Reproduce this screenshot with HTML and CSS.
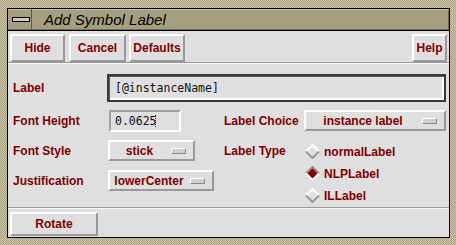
FILE: index.html
```html
<!DOCTYPE html>
<html lang="en">
<head>
    <meta charset="UTF-8">
    <title>Add Symbol Label</title>
    <link rel="stylesheet" href="styles.css">
</head>
<body>
    <div class="frame">
        <div class="window">
            <div class="titlebar">
                <div class="menu-btn"><span class="menu-bar"></span></div>
                <div class="title">Add Symbol Label</div>
            </div>

            <div class="content">
                <div class="actions">
                    <button class="btn btn-hide">Hide</button>
                    <button class="btn btn-cancel">Cancel</button>
                    <button class="btn btn-defaults">Defaults</button>
                    <button class="btn btn-help">Help</button>
                </div>

                <div class="form">
                    <div class="lbl">Label</div>
                    <div class="field field-label">[@instanceName]</div>

                    <div class="lbl">Font Height</div>
                    <div class="field field-height">0.0625<span class="cursor"></span></div>
                    <div class="lbl">Label Choice</div>
                    <div class="option option-choice">
                        <span class="option-text">instance label</span>
                        <span class="indicator"></span>
                    </div>

                    <div class="lbl">Font Style</div>
                    <div class="option option-style">
                        <span class="option-text">stick</span>
                        <span class="indicator"></span>
                    </div>
                    <div class="lbl">Label Type</div>
                    <div class="radios">
                        <div class="radio">
                            <svg width="15" height="15" viewBox="0 0 15 15">
                                <polyline points="1,7.5 7.5,1 14,7.5" fill="none" stroke="#fff" stroke-width="2"/>
                                <polyline points="1,7.5 7.5,14 14,7.5" fill="none" stroke="#999" stroke-width="2"/>
                            </svg>
                            <span>normalLabel</span>
                        </div>
                        <div class="radio">
                            <svg width="15" height="15" viewBox="0 0 15 15">
                                <polygon points="7.5,2 13,7.5 7.5,13 2,7.5" fill="#800000"/>
                                <polyline points="1,7.5 7.5,1 14,7.5" fill="none" stroke="#8c8c8c" stroke-width="2"/>
                                <polyline points="1,7.5 7.5,14 14,7.5" fill="none" stroke="#fff" stroke-width="2"/>
                            </svg>
                            <span>NLPLabel</span>
                        </div>
                        <div class="radio">
                            <svg width="15" height="15" viewBox="0 0 15 15">
                                <polyline points="1,7.5 7.5,1 14,7.5" fill="none" stroke="#fff" stroke-width="2"/>
                                <polyline points="1,7.5 7.5,14 14,7.5" fill="none" stroke="#999" stroke-width="2"/>
                            </svg>
                            <span>ILLabel</span>
                        </div>
                    </div>

                    <div class="lbl">Justification</div>
                    <div class="option option-just">
                        <span class="option-text">lowerCenter</span>
                        <span class="indicator"></span>
                    </div>
                </div>

                <div class="bottom">
                    <button class="btn btn-rotate">Rotate</button>
                </div>
            </div>
        </div>
    </div>
</body>
</html>
```

FILE: styles.css
```css
* {
    box-sizing: border-box;
}
body {
    margin: 0;
    width: 456px;
    height: 245px;
    overflow: hidden;
    font-family: "Liberation Sans", Arial, sans-serif;
}

/* window manager frame */
.frame {
    height: 245px;
    padding: 8px 6px 7px 7px;
    background: repeating-conic-gradient(#d2caab 0 25%, #a39c7e 0 50%) 0 0 / 2px 2px;
}
.window {
    height: 230px;
    border: 1px solid #000;
    display: flex;
    flex-direction: column;
    background: #dfdfdf;
}
.titlebar {
    height: 22px;
    flex: none;
    display: flex;
    align-items: center;
    background: #a59e7f;
    border-bottom: 1px solid #000;
    box-shadow: inset 0 1px 0 #c9c1a2, inset -1px -1px 0 #6e6850;
}
.menu-btn {
    width: 24px;
    height: 100%;
    padding-left: 4px;
    display: flex;
    align-items: center;
    border-right: 1px solid #5e5843;
}
.menu-bar {
    width: 18px;
    height: 5px;
    border: 1px solid #000;
    background: #d3cbab;
}
.title {
    margin-left: 12px;
    font-size: 15px;
    font-style: italic;
    color: #000;
}

/* dialog body */
.content {
    flex: 1;
    display: flex;
    flex-direction: column;
    color: #800000;
    font-size: 12px;
    font-weight: bold;
}
.actions {
    height: 32px;
    flex: none;
    display: flex;
    padding: 3px 2px 0 2px;
    border-bottom: 1px solid #9a9a9a;
}
.btn {
    height: 28px;
    margin: 0;
    padding: 0;
    font: bold 12px "Liberation Sans", Arial, sans-serif;
    color: #800000;
    background: #dfdfdf;
    border: 2px solid;
    border-color: #fff #999 #999 #fff;
}
.btn-hide { width: 55px; }
.btn-cancel { width: 57px; margin-left: 4px; }
.btn-defaults { width: 56px; margin-left: 3px; }
.btn-help { width: 35px; margin-left: auto; }

.form {
    height: 145px;
    flex: none;
    display: grid;
    grid-template-columns: 94px 117px 80px 142px;
    grid-template-rows: 28px 22px 22px 22px;
    row-gap: 8px;
    align-content: start;
    padding: 10px 0 0 5px;
    border-top: 1px solid #fafafa;
    border-bottom: 1px solid #9a9a9a;
}
.lbl {
    align-self: center;
}
.field {
    font: 11.5px "DejaVu Sans Mono", monospace;
    color: #111;
    display: flex;
    align-items: center;
}
.field-label {
    grid-column: 2 / 5;
    padding-left: 6px;
    border: 2px solid #383838;
    box-shadow: inset 1px 1px 0 #5a5a5a, inset -2px -2px 0 #fff;
}
.field-height {
    width: 72px;
    margin-left: 2px;
    padding-left: 4px;
    border: 2px solid;
    border-color: #a0a0a0 #fff #fff #a0a0a0;
}
.cursor {
    display: inline-block;
    width: 1px;
    height: 12px;
    margin-left: -2px;
    border-left: 1px dotted #333;
}

.option {
    height: 21px;
    align-self: start;
    display: flex;
    align-items: center;
    border: 2px solid;
    border-color: #fff #999 #999 #fff;
}
.option-text {
    flex: 1;
    text-align: center;
}
.indicator {
    width: 15px;
    height: 6px;
    margin: 0 7px 0 2px;
    background: #cfcfcf;
    border: 1px solid;
    border-color: #fff #8a8a8a #8a8a8a #fff;
}
.option-choice {
    width: 142px;
}
.option-style {
    width: 87px;
    margin-left: 1px;
}
.option-just {
    width: 106px;
    margin-left: 1px;
}

.radios {
    grid-row: 3 / span 2;
    grid-column: 4;
    align-self: start;
    margin: 4px 0 0 1px;
    display: flex;
    flex-direction: column;
    gap: 7px;
}
.radio {
    height: 15px;
    display: flex;
    align-items: center;
    gap: 4px;
}
.radio svg {
    flex: none;
}

.bottom {
    flex: 1;
    padding: 3px 0 0 2px;
    border-top: 1px solid #fafafa;
}
.btn-rotate {
    width: 88px;
    height: 24px;
}
```
